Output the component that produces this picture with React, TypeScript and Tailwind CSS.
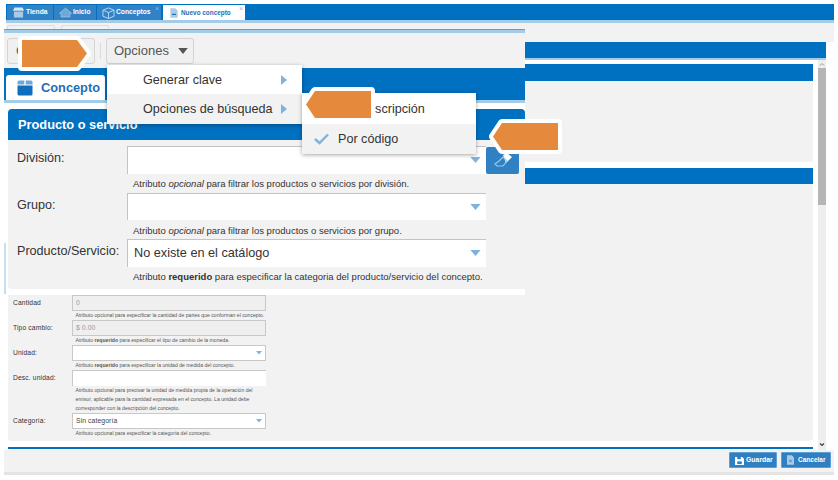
// App.tsx
import React from 'react';

function Caret({ className = '' }: { className?: string }) {
  return (
    <svg viewBox="0 0 12 7" className={className}>
      <polygon points="0,0 12,0 6,7" fill="#7fb2dc" />
    </svg>
  );
}

function Callout({ dir, className }: { dir: 'left' | 'right'; className: string }) {
  const points = dir === 'right' ? '5,5 60,5 70,18.5 60,32 5,32' : '14,5 70,5 70,32 14,32 5,18.5';
  return (
    <svg viewBox="0 0 79 37" className={`absolute w-[79px] h-[37px] ${className}`}>
      <polygon points={points} fill="#e58a3d" stroke="#ffffff" strokeWidth="8" strokeLinejoin="round" paintOrder="stroke" />
    </svg>
  );
}

function TabIcon({ kind }: { kind: 'store' | 'home' | 'box' | 'file' }) {
  if (kind === 'store') {
    return (
      <svg viewBox="0 0 14 12" className="w-[13px] h-[11px]">
        <path d="M1 4 L2.5 0.5 H11.5 L13 4 Z" fill="#d5e6f3" />
        <rect x="2" y="5" width="10" height="6.5" fill="#a9cbe6" />
      </svg>
    );
  }
  if (kind === 'home') {
    return (
      <svg viewBox="0 0 16 12" className="w-[13px] h-[11px]">
        <path d="M8 0.5 L15.5 7 H13.5 V11.5 H2.5 V7 H0.5 Z" fill="#6fa8d8" stroke="#a9cbe6" strokeWidth="0.8" />
      </svg>
    );
  }
  if (kind === 'box') {
    return (
      <svg viewBox="0 0 14 13" className="w-[13px] h-[12px]" fill="none" stroke="#c4dcef" strokeWidth="1">
        <path d="M7 1 L13 3.5 V10 L7 12.5 L1 10 V3.5 Z" />
        <path d="M1 3.5 L7 6 L13 3.5 M7 6 V12.5" />
      </svg>
    );
  }
  return (
    <svg viewBox="0 0 10 13" className="w-[8px] h-[12px]">
      <path d="M0.5 0.5 H6.5 L9.5 3.5 V12.5 H0.5 Z" fill="#a9cbe6" />
      <rect x="2.5" y="7.5" width="5" height="1.5" fill="#1f6fb5" />
    </svg>
  );
}

function Tab({ label, kind, width, close }: { label: string; kind: 'store' | 'home' | 'box'; width: string; close?: boolean }) {
  return (
    <div className={`relative flex items-center gap-[1px] pl-[5px] bg-[#2f83c6] h-[15px] ${width}`}>
      <TabIcon kind={kind} />
      <span className="text-white font-bold text-[6.7px]">{label}</span>
      {close && <span className="absolute right-[2px] top-[0px] text-[7px] leading-[8px] text-[#8dbde2]">×</span>}
    </div>
  );
}

function TopField({ label, hint, value }: { label: string; hint: React.ReactNode; value?: string }) {
  return (
    <div className="flex h-[46.5px]">
      <div className="w-[110px] pt-[3px] text-[12.6px] text-[#333333] whitespace-nowrap">{label}</div>
      <div className="w-[359px]">
        <div className="h-[27.5px] bg-white border-l border-t border-[#c4c4c4] flex items-center justify-between pl-[6px] pr-[5px]">
          <span className="text-[12.7px] text-[#333333]">{value}</span>
          <Caret className="w-[11px] h-[6px]" />
        </div>
        <div className="pl-[6px] pt-[4.5px] text-[9.5px] leading-[11px] text-[#333333] whitespace-nowrap">{hint}</div>
      </div>
    </div>
  );
}

function SmallField({ label, value, hint, disabled, caret, open }: { label: string; value?: string; hint: React.ReactNode; disabled?: boolean; caret?: boolean; open?: boolean }) {
  return (
    <div className="flex">
      <div className="w-[60px] pl-[1px] pt-[3px] text-[6.7px] tracking-[0.15px] text-[#333333] whitespace-nowrap">{label}</div>
      <div className="w-[194px]">
        <div
          className={`h-[15.5px] flex items-center justify-between pl-[3px] pr-[3px] border-[#c8c8c8] ${
            disabled ? 'bg-[#efefef] border' : open ? 'bg-white border-l border-t' : 'bg-white border-[1.5px] border-[#bdbdbd]'
          }`}
        >
          <span className={`text-[6.8px] tracking-[0.1px] ${disabled ? 'text-[#999999]' : 'text-[#444444]'}`}>{value}</span>
          {caret && <Caret className="w-[6px] h-[3.5px]" />}
        </div>
        <div className="pl-[3.5px] pb-[0.5px] text-[5.12px] leading-[9px] text-[#555555] whitespace-nowrap">{hint}</div>
      </div>
    </div>
  );
}

function MenuArrow() {
  return (
    <svg viewBox="0 0 6 10" className="w-[6px] h-[10px]">
      <polygon points="0,0 6,5 0,10" fill="#7fb2dc" />
    </svg>
  );
}

function FooterButton({ label, width, textSize, icon }: { label: string; width: string; textSize: string; icon: React.ReactNode }) {
  return (
    <button className={`flex items-center gap-[2px] pl-[5px] h-[16px] rounded-[1px] bg-[#2f7fc1] border border-[#5d9fd3] text-white font-bold ${textSize} ${width}`}>
      {icon}
      {label}
    </button>
  );
}

export default function App() {
  return (
    <div className="relative w-[838px] h-[480px] overflow-hidden bg-white font-['Liberation_Sans',Arial,sans-serif]">
      {/* base window */}
      <div className="flex flex-col h-full pt-[4px]">
        <div className="ml-[6px] mr-[4px] h-[16px] bg-[#0070c0] flex items-end pl-[1px]">
          <div className="flex gap-[1px]">
            <Tab label="Tienda" kind="store" width="w-[46px]" />
            <Tab label="Inicio" kind="home" width="w-[42px]" />
            <Tab label="Conceptos" kind="box" width="w-[64px]" close />
          </div>
          <div className="relative ml-[2px] flex items-center gap-[3px] pl-[7px] w-[82px] h-[15px] bg-white">
            <TabIcon kind="file" />
            <span className="text-[#1f6fb5] font-bold text-[6.4px] whitespace-nowrap">Nuevo concepto</span>
            <span className="absolute right-[2px] top-[0px] text-[7px] leading-[8px] text-[#8dbde2]">×</span>
          </div>
        </div>
        <div className="ml-[6px] mr-[4px] h-[3px] bg-[#a3cce9]" />
        <div className="ml-[6px] mr-[4px] h-[19px] bg-[#f2f2f2] flex gap-[6px] pl-[1px] pt-[2px]">
          <div className="w-[48px] h-[10px] border border-[#dddddd] rounded-[2px]" />
          <div className="w-[48px] h-[10px] border border-[#dddddd] rounded-[2px]" />
        </div>

        <div className="ml-[4px] mr-[12px] h-[16px] bg-[#0070c0]" />
        <div className="ml-[4px] mr-[12px] h-[2px] bg-[#a3cce9]" />

        <div className="flex ml-[4px] mr-[12px] h-[390px]">
          <div className="flex-1 pl-[4px] pr-[5px] pt-[4px] flex flex-col">
            <div className="h-[17px] bg-[#0070c0]" />
            <div className="h-[81px] bg-[#f2f2f2]" />
            <div className="h-[6px]" />
            <div className="h-[16px] bg-[#0070c0]" />
            <div className="bg-[#f2f2f2] h-[257px] rounded-b-[4px] pl-[4px] pt-[111px]">
              <SmallField label="Cantidad" value="0" disabled hint="Atributo opcional para especificar la cantidad de partes que conforman el concepto." />
              <SmallField
                label="Tipo cambio:"
                value="$ 0.00"
                disabled
                hint={<>Atributo <b>requerido</b> para especificar el tipo de cambio de la moneda.</>}
              />
              <SmallField
                label="Unidad:"
                caret
                hint={<>Atributo <b>requerido</b> para especificar la unidad de medida del concepto.</>}
              />
              <SmallField
                label="Desc. unidad:"
                open
                hint={
                  <>
                    Atributo opcional para precisar la unidad de medida propia de la operación del
                    <br />
                    emisor, aplicable para la cantidad expresada en el concepto. La unidad debe
                    <br />
                    corresponder con la descripción del concepto.
                  </>
                }
              />
              <SmallField label="Categoría:" value="Sin categoría" caret hint="Atributo opcional para especificar la categoría del concepto." />
            </div>
            <div className="h-[6px]" />
            <div className="h-[2px] bg-[#0070c0]" />
          </div>
          <div className="w-[8px] flex flex-col items-center bg-[#eeeeee]">
            <svg viewBox="0 0 8 6" className="w-[8px] h-[7px] shrink-0 mt-[1px]" fill="none" stroke="#999999" strokeWidth="1">
              <path d="M2 4 L4 2 L6 4" />
            </svg>
            <div className="w-full h-[137px] bg-[#b5b5b5] shrink-0" />
            <div className="flex-1" />
            <svg viewBox="0 0 8 6" className="w-[8px] h-[7px] shrink-0 mb-[2px]" fill="none" stroke="#444444" strokeWidth="1.2">
              <path d="M2 2 L4 4 L6 2" />
            </svg>
          </div>
        </div>

        <div className="ml-[4px] mr-[4px] h-[22px] bg-[#f2f2f2] flex justify-end gap-[4px] pt-[2px] pr-[3px]">
          <FooterButton
            label="Guardar"
            width="w-[48px]"
            textSize="text-[6.9px]"
            icon={
              <svg viewBox="0 0 10 10" className="w-[9px] h-[9px]">
                <path d="M0 1 H8 L10 3 V10 H0 Z" fill="#ffffff" />
                <rect x="2.5" y="1" width="4" height="2.5" fill="#2f7fc1" />
                <rect x="2.5" y="6" width="5" height="3" fill="#2f7fc1" />
              </svg>
            }
          />
          <FooterButton
            label="Cancelar"
            width="w-[50px]"
            textSize="text-[6.5px]"
            icon={
              <svg viewBox="0 0 8 11" className="w-[7px] h-[10px] mr-[2px]">
                <path d="M0 0 H5.5 L8 2.5 V11 H0 Z" fill="#a9cbe6" />
                <path d="M2.5 5 L5.5 8 M5.5 5 L2.5 8" stroke="#2f7fc1" strokeWidth="1" />
              </svg>
            }
          />
        </div>
        <div className="ml-[4px] mr-[4px] h-[3px] bg-[#e4e4e4]" />
      </div>

      {/* captura sobrepuesta */}
      <div className="absolute left-[4px] top-[29px] w-[521px] h-[266px] bg-white flex flex-col">
        <div className="h-[4px] bg-[#a3cce9] border-t border-[#5b9fd6]" />
        <div className="h-[35px] bg-[#f2f2f2] flex items-start pl-[3px] pt-[5px]">
          <div className="w-[88px] h-[26px] border border-[#d4d4d4] rounded-[3px] bg-[#f0f0f0] pl-[8px] flex items-center text-[13px] text-[#555555]">
            Concepto
          </div>
          <div className="w-[1px] h-[16px] bg-[#dcdcdc] mx-[5px] mt-[5px]" />
          <div className="w-[88px] h-[26px] border border-[#d4d4d4] rounded-[3px] bg-[#f0f0f0] pl-[7px] flex items-center gap-[9px] text-[13px] text-[#555555]">
            Opciones
            <svg viewBox="0 0 8 5" className="w-[10px] h-[6px]">
              <polygon points="0,0 8,0 4,5" fill="#555555" />
            </svg>
          </div>
        </div>
        <div className="h-[32px] bg-[#0070c0] flex items-end pl-[2px]">
          <div className="w-[99px] h-[25px] bg-white rounded-t-[3px] flex items-center gap-[8px] pl-[11px]">
            <svg viewBox="0 0 16 16" className="w-[16px] h-[16px]">
              <path d="M2 0.5 H7.3 V4.5 H0.5 V2 Q0.5 0.5 2 0.5 Z M8.7 0.5 H14 Q15.5 0.5 15.5 2 V4.5 H8.7 Z" fill="#6fa8d8" />
              <path d="M0.5 5.5 H15.5 V14 Q15.5 15.5 14 15.5 H2 Q0.5 15.5 0.5 14 Z" fill="#0f6fbd" />
            </svg>
            <span className="text-[12.8px] font-bold text-[#1f6fb5]">Concepto</span>
          </div>
        </div>
        <div className="h-[3px] bg-[#a3cce9]" />
        <div className="h-[6px] bg-white" />
        <div className="ml-[4px] h-[31px] bg-[#0070c0] rounded-t-[4px] pl-[10px] pt-[6px] text-[12.8px] font-bold text-white">
          Producto o servicio
        </div>
        <div className="ml-[4px] h-[149px] bg-[#f2f2f2] rounded-bl-[4px] pl-[9px] pt-[6px]">
          <TopField label="División:" hint={<>Atributo <i>opcional</i> para filtrar los productos o servicios por división.</>} />
          <TopField label="Grupo:" hint={<>Atributo <i>opcional</i> para filtrar los productos o servicios por grupo.</>} />
          <TopField
            label="Producto/Servicio:"
            value="No existe en el catálogo"
            hint={<>Atributo <b>requerido</b> para especificar la categoria del producto/servicio del concepto.</>}
          />
        </div>
        <div className="absolute left-0 top-[214px] w-[2px] h-[51px] bg-[#c5dff2]" />
      </div>

      {/* botón borrar */}
      <div className="absolute left-[486px] top-[147px] w-[33px] h-[27px] rounded-[2px] bg-[#3080c4] flex items-center justify-center">
        <svg viewBox="0 0 20 14" className="w-[20px] h-[14px]">
          <path d="M10 1 L14 -1 L19 3 L13 9 Z" fill="#ffffff" />
          <path d="M6 7 L10 3 L14 7 L10 12 H4 L2 10 Z" fill="none" stroke="#9cc6e6" strokeWidth="1.2" />
        </svg>
      </div>

      {/* menú Opciones */}
      <div className="absolute left-[107px] top-[65px] w-[195px] bg-white shadow-[0_1px_4px_rgba(0,0,0,0.35)] text-[12.6px] text-[#333333]">
        <div className="h-[29px] flex items-center justify-between pl-[36px] pr-[15px] pt-[1px]">
          Generar clave
          <MenuArrow />
        </div>
        <div className="h-[30px] flex items-center justify-between pl-[36px] pr-[15px] bg-[#f2f2f2]">
          Opciones de búsqueda
          <MenuArrow />
        </div>
      </div>

      {/* submenú */}
      <div className="absolute left-[302px] top-[93px] w-[174px] bg-white shadow-[0_1px_4px_rgba(0,0,0,0.35)] text-[12.6px] text-[#333333]">
        <div className="h-[31px] flex items-center pl-[36px] pt-[2px]">Por descripción</div>
        <div className="h-[30px] flex items-center gap-[9px] pl-[12px] bg-[#f2f2f2]">
          <svg viewBox="0 0 15 12" className="w-[15px] h-[12px]" fill="none" stroke="#7fb2dc" strokeWidth="2.4">
            <path d="M1 6 L5.5 10 L14 1.5" />
          </svg>
          Por código
        </div>
      </div>

      <Callout dir="right" className="left-[17px] top-[35px]" />
      <Callout dir="left" className="left-[301px] top-[86px]" />
      <Callout dir="left" className="left-[488px] top-[118px]" />
    </div>
  );
}
